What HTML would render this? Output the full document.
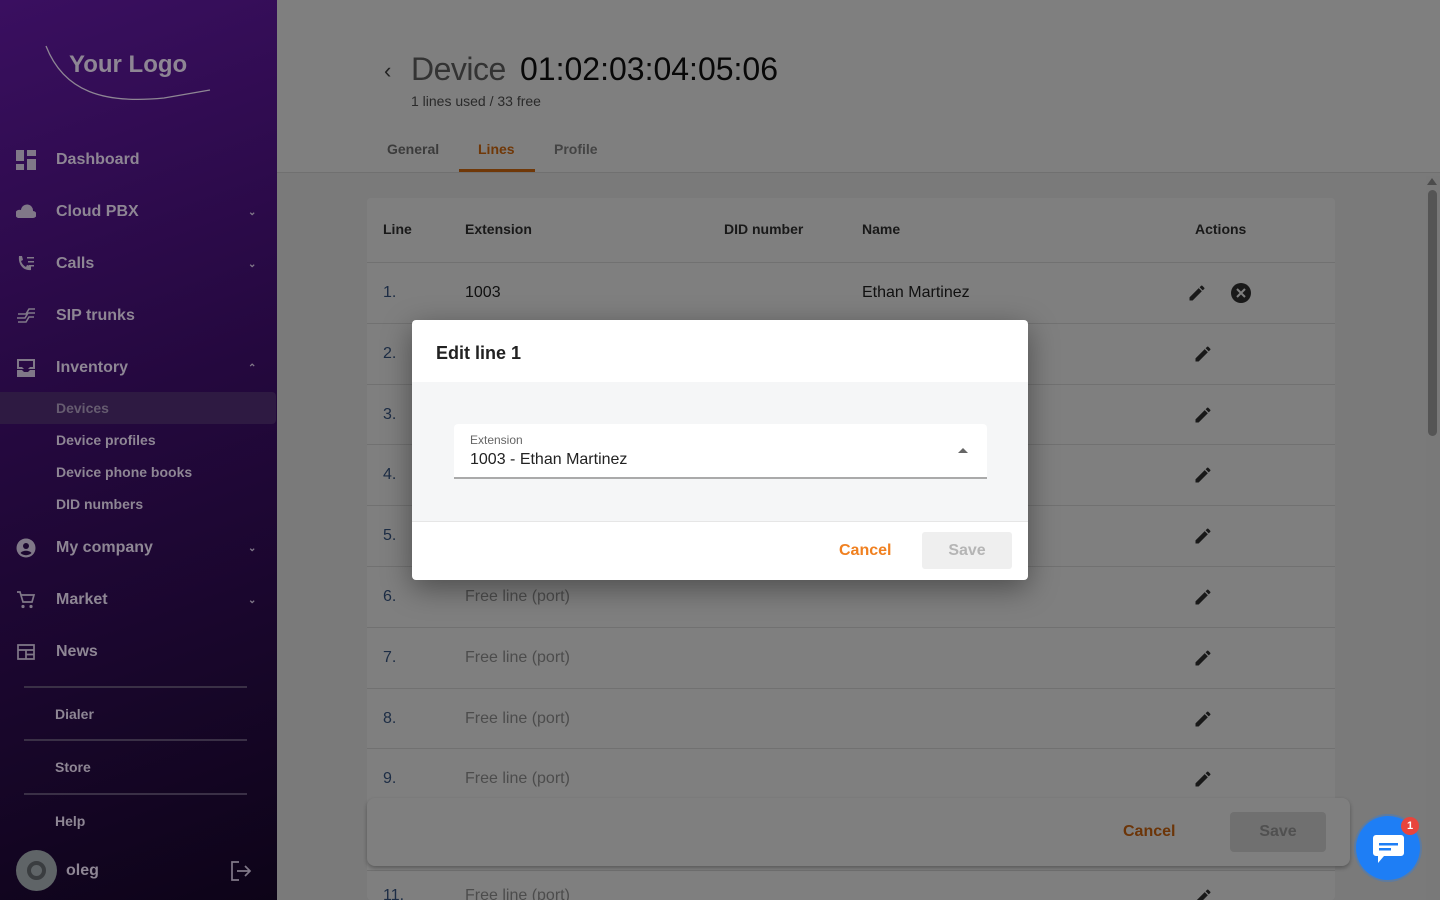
<!DOCTYPE html>
<html style="width:1440px;height:900px;overflow:hidden"><head><meta charset="utf-8"><style>
*{box-sizing:border-box;margin:0;padding:0}
body{width:1440px;height:900px;overflow:hidden;font-family:"Liberation Sans",Roboto,sans-serif;background:#f4f4f4;position:relative}
.side{position:absolute;left:0;top:0;width:277px;height:900px;background:linear-gradient(160deg,#3a0f60 0%,#24083e 45%,#0d0418 100%);color:#8e8694;z-index:5;overflow:hidden}
.side .it{position:absolute;left:0;width:277px;height:52px;display:flex;align-items:center;font-size:16px;font-weight:bold}
.side .it .ic{position:absolute;left:16px;width:20px;height:20px}
.side .it span{position:absolute;left:56px}
.side .chev{position:absolute;left:248px;font-size:10px;color:#807888}
.sub{position:absolute;left:56px;font-size:14px;font-weight:bold}
.sep{position:absolute;left:24px;width:223px;height:2px;background:#3a3046}
.main{position:absolute;left:277px;top:0;width:1163px;height:900px;overflow:hidden}
.hdr{position:absolute;left:0;right:0;top:0;height:173px;background:#fff;border-bottom:1px solid #e0e0e0}
.card{position:absolute;left:90px;top:198px;width:968px;height:702px;background:#fff;border-radius:4px;overflow:hidden}
.th{position:absolute;top:23px;font-size:14px;font-weight:bold;color:#333}
.row{position:absolute;left:0;width:968px;height:61px;border-top:1px solid #e2e2e2;font-size:16px;color:#222}
.row .n{position:absolute;left:16px;top:21px;color:#3a5a8a}
.row .e{position:absolute;left:98px;top:21px}
.row .f{position:absolute;left:98px;top:21px;color:#999}
.pen{position:absolute;left:826px;top:20px}
.ov{position:absolute;left:277px;top:0;width:1163px;height:900px;background:rgba(0,0,0,.5);z-index:10}
.modal{position:absolute;left:412px;top:320px;width:616px;height:260px;background:#fff;border-radius:4px;z-index:20;box-shadow:0 8px 30px rgba(0,0,0,.4);overflow:hidden}
</style></head><body>
<div class="side">
  <svg style="position:absolute;left:44px;top:42px" width="170" height="62"><path d="M2 4 C20 50 60 62 120 56 L166 48" stroke="#8e8694" fill="none" stroke-width="1.3"/><text x="25" y="30" font-family="Liberation Sans" font-weight="bold" font-size="24" fill="#8e8694">Your Logo</text></svg>
  <div class="it" style="top:134px"><svg class="ic" viewBox="0 0 20 20"><path fill="#807888" d="M0 0h8v11H0zM11 0h9v6h-9zM11 9h9v11h-9zM0 14h8v6H0z"/></svg><span>Dashboard</span></div>
  <div class="it" style="top:186px"><svg class="ic" viewBox="0 0 20 20"><path fill="#807888" d="M2 16h15a3 3 0 0 0 0-7A6 6 0 0 0 5 8a4 4 0 0 0-3 8z"/></svg><span>Cloud PBX</span><div class="chev">&#8964;</div></div>
  <div class="it" style="top:238px"><svg class="ic" viewBox="0 0 20 20"><path fill="#807888" d="M3 2h3l1 4-2 1a10 10 0 0 0 5 6l1-2 4 1v4c-8 1-13-6-12-14zM11 3h7v1.5h-7zM12 7h6v1.5h-6zM13 11h5v1.5h-5z"/></svg><span>Calls</span><div class="chev">&#8964;</div></div>
  <div class="it" style="top:290px"><svg class="ic" viewBox="0 0 20 20"><path stroke="#807888" fill="none" stroke-width="1.6" d="M2 8h8l3-5h6M1 12h8l3-5h7M2 16h8l3-5h5"/></svg><span>SIP trunks</span></div>
  <div class="it" style="top:342px"><svg class="ic" viewBox="0 0 20 20"><path fill="#807888" d="M1 1h18v10H1zM1 12h5l2 2h4l2-2h5v7H1z"/><path fill="#2a0a44" d="M3 3h14v6h-3l-2 2h-4l-2-2H3z"/></svg><span>Inventory</span><div class="chev">&#8963;</div></div>
  <div style="position:absolute;left:0;top:392px;width:276px;height:32px;background:#2e1a42;border-radius:0 4px 4px 0"></div>
  <div class="sub" style="top:400px;color:#665c70">Devices</div>
  <div class="sub" style="top:432px">Device profiles</div>
  <div class="sub" style="top:464px">Device phone books</div>
  <div class="sub" style="top:496px">DID numbers</div>
  <div class="it" style="top:522px"><svg class="ic" viewBox="0 0 20 20"><circle cx="10" cy="10" r="9.5" fill="#807888"/><circle cx="10" cy="8" r="3" fill="#1c0830"/><path fill="#1c0830" d="M4.5 15c2-3 9-3 11 0a8 8 0 0 1-11 0z"/></svg><span>My company</span><div class="chev">&#8964;</div></div>
  <div class="it" style="top:574px"><svg class="ic" viewBox="0 0 20 20"><path stroke="#807888" fill="none" stroke-width="1.7" d="M1 2h3l3 10h9l2-7H5"/><circle cx="7" cy="16.5" r="1.6" fill="#807888"/><circle cx="15" cy="16.5" r="1.6" fill="#807888"/></svg><span>Market</span><div class="chev">&#8964;</div></div>
  <div class="it" style="top:626px"><svg class="ic" viewBox="0 0 20 20"><path stroke="#807888" fill="none" stroke-width="1.7" d="M2 3h16v14H2zM2 8h16M10 8v9M10 12.5h8"/></svg><span>News</span></div>
  <div class="sep" style="top:686px"></div>
  <div class="sub" style="top:706px;left:55px">Dialer</div>
  <div class="sep" style="top:739px"></div>
  <div class="sub" style="top:759px;left:55px">Store</div>
  <div class="sep" style="top:793px"></div>
  <div class="sub" style="top:813px;left:55px">Help</div>
  <div style="position:absolute;left:16px;top:850px;width:41px;height:41px;border-radius:50%;background:#5f6467"></div>
  <div style="position:absolute;left:27px;top:861px;width:19px;height:19px;border-radius:50%;border:4px solid #3a3d40"></div>
  <div style="position:absolute;left:66px;top:862px;font-size:16px;font-weight:bold">oleg</div>
  <svg style="position:absolute;left:230px;top:861px" width="22" height="20" viewBox="0 0 22 20"><path stroke="#807888" fill="none" stroke-width="1.7" d="M9 1H2v18h7M7 10h13M15 5l5 5-5 5"/></svg>
</div>
<div class="main">
  <div class="hdr">
    <div style="position:absolute;left:107px;top:58px;font-size:22px;color:#444">&#8249;</div>
    <div style="position:absolute;left:134px;top:51px;font-size:32px;color:#666;font-weight:300;letter-spacing:-0.5px">Device</div>
    <div style="position:absolute;left:243px;top:51px;font-size:32px;color:#111">01:02:03:04:05:06</div>
    <div style="position:absolute;left:134px;top:93px;font-size:14px;color:#555">1 lines used / 33 free</div>
    <div style="position:absolute;left:110px;top:141px;font-size:14px;font-weight:bold;color:#777">General</div>
    <div style="position:absolute;left:201px;top:141px;font-size:14px;font-weight:bold;color:#e07010">Lines</div>
    <div style="position:absolute;left:277px;top:141px;font-size:14px;font-weight:bold;color:#888">Profile</div>
    <div style="position:absolute;left:182px;top:169px;width:76px;height:3px;background:#e07010"></div>
  </div>
  <div class="card">
    <div class="th" style="left:16px">Line</div><div class="th" style="left:98px">Extension</div><div class="th" style="left:357px">DID number</div><div class="th" style="left:495px">Name</div><div class="th" style="left:828px">Actions</div>
    <div class="row" style="top:64px"><div class="n">1.</div><div class="e">1003</div><div style="position:absolute;left:495px;top:21px">Ethan Martinez</div>
      <svg class="pen" style="left:820px" width="20" height="20" viewBox="0 0 24 24"><path fill="#333" d="M3 17.25V21h3.75L17.81 9.94l-3.75-3.75zM20.71 7.04a1 1 0 0 0 0-1.41l-2.34-2.34a1 1 0 0 0-1.41 0l-1.83 1.83 3.75 3.75z"/></svg>
      <svg style="position:absolute;left:864px;top:20px" width="20" height="20" viewBox="0 0 20 20"><circle cx="10" cy="10" r="10" fill="#333"/><path stroke="#fff" stroke-width="2" d="M6 6l8 8M14 6l-8 8"/></svg></div>
    <div class="row" style="top:125px"><div class="n">2.</div><div class="f">Free line (port)</div><svg class="pen" width="20" height="20" viewBox="0 0 24 24"><path fill="#333" d="M3 17.25V21h3.75L17.81 9.94l-3.75-3.75zM20.71 7.04a1 1 0 0 0 0-1.41l-2.34-2.34a1 1 0 0 0-1.41 0l-1.83 1.83 3.75 3.75z"/></svg></div>
    <div class="row" style="top:186px"><div class="n">3.</div><div class="f">Free line (port)</div><svg class="pen" width="20" height="20" viewBox="0 0 24 24"><path fill="#333" d="M3 17.25V21h3.75L17.81 9.94l-3.75-3.75zM20.71 7.04a1 1 0 0 0 0-1.41l-2.34-2.34a1 1 0 0 0-1.41 0l-1.83 1.83 3.75 3.75z"/></svg></div>
    <div class="row" style="top:246px"><div class="n">4.</div><div class="f">Free line (port)</div><svg class="pen" width="20" height="20" viewBox="0 0 24 24"><path fill="#333" d="M3 17.25V21h3.75L17.81 9.94l-3.75-3.75zM20.71 7.04a1 1 0 0 0 0-1.41l-2.34-2.34a1 1 0 0 0-1.41 0l-1.83 1.83 3.75 3.75z"/></svg></div>
    <div class="row" style="top:307px"><div class="n">5.</div><div class="f">Free line (port)</div><svg class="pen" width="20" height="20" viewBox="0 0 24 24"><path fill="#333" d="M3 17.25V21h3.75L17.81 9.94l-3.75-3.75zM20.71 7.04a1 1 0 0 0 0-1.41l-2.34-2.34a1 1 0 0 0-1.41 0l-1.83 1.83 3.75 3.75z"/></svg></div>
    <div class="row" style="top:368px"><div class="n">6.</div><div class="f">Free line (port)</div><svg class="pen" width="20" height="20" viewBox="0 0 24 24"><path fill="#333" d="M3 17.25V21h3.75L17.81 9.94l-3.75-3.75zM20.71 7.04a1 1 0 0 0 0-1.41l-2.34-2.34a1 1 0 0 0-1.41 0l-1.83 1.83 3.75 3.75z"/></svg></div>
    <div class="row" style="top:429px"><div class="n">7.</div><div class="f">Free line (port)</div><svg class="pen" width="20" height="20" viewBox="0 0 24 24"><path fill="#333" d="M3 17.25V21h3.75L17.81 9.94l-3.75-3.75zM20.71 7.04a1 1 0 0 0 0-1.41l-2.34-2.34a1 1 0 0 0-1.41 0l-1.83 1.83 3.75 3.75z"/></svg></div>
    <div class="row" style="top:490px"><div class="n">8.</div><div class="f">Free line (port)</div><svg class="pen" width="20" height="20" viewBox="0 0 24 24"><path fill="#333" d="M3 17.25V21h3.75L17.81 9.94l-3.75-3.75zM20.71 7.04a1 1 0 0 0 0-1.41l-2.34-2.34a1 1 0 0 0-1.41 0l-1.83 1.83 3.75 3.75z"/></svg></div>
    <div class="row" style="top:550px"><div class="n">9.</div><div class="f">Free line (port)</div><svg class="pen" width="20" height="20" viewBox="0 0 24 24"><path fill="#333" d="M3 17.25V21h3.75L17.81 9.94l-3.75-3.75zM20.71 7.04a1 1 0 0 0 0-1.41l-2.34-2.34a1 1 0 0 0-1.41 0l-1.83 1.83 3.75 3.75z"/></svg></div>
    <div class="row" style="top:672px"><div class="n" style="top:16px">11.</div><div class="f" style="top:16px">Free line (port)</div><svg class="pen" style="top:16px" width="20" height="20" viewBox="0 0 24 24"><path fill="#333" d="M3 17.25V21h3.75L17.81 9.94l-3.75-3.75zM20.71 7.04a1 1 0 0 0 0-1.41l-2.34-2.34a1 1 0 0 0-1.41 0l-1.83 1.83 3.75 3.75z"/></svg></div>
  </div>
  <div style="position:absolute;left:90px;top:798px;width:983px;height:68px;background:#fff;border-radius:8px;box-shadow:0 2px 4px rgba(0,0,0,.3)">
    <div style="position:absolute;left:756px;top:25px;font-size:16px;font-weight:bold;color:#d86a10">Cancel</div>
    <div style="position:absolute;left:863px;top:14px;width:96px;height:40px;background:#e0e0e0;border-radius:4px;color:#a0a0a0;font-size:16px;font-weight:bold;text-align:center;line-height:40px">Save</div>
  </div>
  <div style="position:absolute;left:1149px;top:176px;width:14px;height:724px;background:#f2f2f2"></div>
  <div style="position:absolute;left:1151px;top:190px;width:9px;height:246px;background:#aaa;border-radius:5px"></div>
  <div style="position:absolute;left:1150px;top:178px;width:0;height:0;border:5px solid transparent;border-bottom:7px solid #999;border-top:0"></div>
</div>
<div class="ov"></div>
<div style="position:absolute;left:1356px;top:816px;width:64px;height:64px;border-radius:50%;background:#1e7ef5;z-index:15;box-shadow:0 0 0 2px rgba(30,126,245,.3)">
  <svg style="position:absolute;left:17px;top:19px" width="31" height="29" viewBox="0 0 31 29"><path fill="#fff" d="M3 0h25a3 3 0 0 1 3 3v15a3 3 0 0 1-3 3H11l-6 7v-7H3a3 3 0 0 1-3-3V3a3 3 0 0 1 3-3z"/><path fill="#1e7ef5" d="M6 8h19v2.5H6zM6 13h12v2.5H6z"/></svg>
  <div style="position:absolute;left:45px;top:1px;width:18px;height:18px;border-radius:50%;background:#e8453c;color:#fff;font-size:11px;font-weight:bold;text-align:center;line-height:18px">1</div>
</div>
<div class="modal">
  <div style="position:absolute;left:24px;top:23px;font-size:18px;font-weight:bold;color:#222">Edit line 1</div>
  <div style="position:absolute;left:0;top:62px;width:616px;height:140px;background:#f5f6f7;border-bottom:1px solid #e6e6e6">
    <div style="position:absolute;left:42px;top:42px;width:533px;height:55px;background:#fff;border-radius:4px 4px 0 0;border-bottom:2px solid #aaa">
      <div style="position:absolute;left:16px;top:9px;font-size:12px;color:#666">Extension</div>
      <div style="position:absolute;left:16px;top:27px;font-size:16px;color:#222">1003 - Ethan Martinez</div>
      <div style="position:absolute;left:504px;top:24px;width:0;height:0;border:5px solid transparent;border-bottom:5px solid #666;border-top:0"></div>
    </div>
  </div>
  <div style="position:absolute;left:427px;top:222px;font-size:16px;font-weight:bold;color:#f08020">Cancel</div>
  <div style="position:absolute;left:510px;top:212px;width:90px;height:37px;background:#efefef;border-radius:3px;color:#b5b5b5;font-size:16px;font-weight:bold;text-align:center;line-height:37px">Save</div>
</div>
</body></html>
